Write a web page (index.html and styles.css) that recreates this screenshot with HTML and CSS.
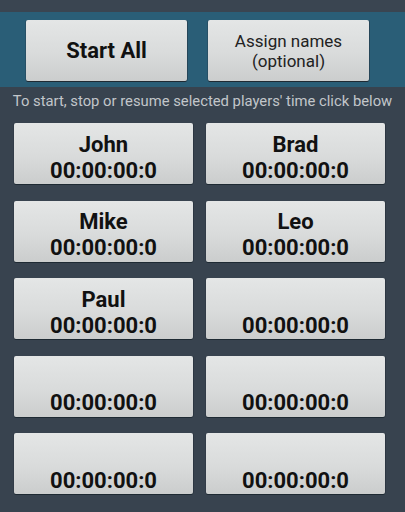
FILE: index.html
```html
<!DOCTYPE html>
<html>
<head>
<meta charset="utf-8">
<link rel="stylesheet" href="styles.css">
</head>
<body>
<div class="status"></div>
<div class="header">
  <button class="btn top start">Start All</button>
  <button class="btn top assign">Assign names<br>(optional)</button>
</div>
<div class="caption">To start, stop or resume selected players' time click below</div>
<div class="grid">
  <button class="btn cell"><span class="name">John</span><span class="time">00:00:00:0</span></button>
  <button class="btn cell"><span class="name">Brad</span><span class="time">00:00:00:0</span></button>
  <button class="btn cell"><span class="name">Mike</span><span class="time">00:00:00:0</span></button>
  <button class="btn cell"><span class="name">Leo</span><span class="time">00:00:00:0</span></button>
  <button class="btn cell"><span class="name">Paul</span><span class="time">00:00:00:0</span></button>
  <button class="btn cell"><span class="name"></span><span class="time">00:00:00:0</span></button>
  <button class="btn cell"><span class="name"></span><span class="time">00:00:00:0</span></button>
  <button class="btn cell"><span class="name"></span><span class="time">00:00:00:0</span></button>
  <button class="btn cell"><span class="name"></span><span class="time">00:00:00:0</span></button>
  <button class="btn cell"><span class="name"></span><span class="time">00:00:00:0</span></button>
</div>
</body>
</html>
```
FILE: styles.css
```css
html, body {
  margin: 0;
  padding: 0;
  background: #38434f;
  font-family: Roboto, "Noto Sans", sans-serif;
  width: 405px;
  height: 512px;
  overflow: hidden;
}
.status {
  height: 12px;
  background: #3a4551;
}
.header {
  height: 75px;
  background: #2a5e77;
  box-sizing: border-box;
  padding: 8px 0 0 26px;
  display: flex;
  gap: 21px;
}
.btn {
  margin: 0;
  padding: 0;
  border: none;
  border-radius: 2px;
  background: linear-gradient(to bottom, #e4e6e6 0%, #d9dbdb 55%, #cbcdcd 100%);
  box-shadow: 0 1px 0 #1e2a33, 1px 0 0 rgba(30,40,50,0.45), -1px 0 0 rgba(30,40,50,0.25);
  color: #111;
  font-family: Roboto, "Noto Sans", sans-serif;
  cursor: pointer;
}
.top {
  width: 161px;
  height: 61px;
}
.start {
  font-weight: bold;
  font-size: 22px;
}
.assign {
  font-size: 17px;
  line-height: 20px;
  color: #222;
}
.caption {
  height: 36px;
  box-sizing: border-box;
  padding-top: 3px;
  font-size: 14.8px;
  line-height: 22px;
  color: #c2c6ca;
  text-align: center;
  white-space: nowrap;
}
.grid {
  display: grid;
  grid-template-columns: 179px 179px;
  grid-auto-rows: 61px;
  column-gap: 13px;
  row-gap: 16.5px;
  padding-left: 14px;
}
.cell {
  display: flex;
  flex-direction: column;
  align-items: center;
  box-sizing: border-box;
  padding-top: 8.5px;
  font-weight: bold;
  font-size: 22px;
  line-height: 26px;
}
.name, .time {
  display: block;
  height: 26px;
}
```
